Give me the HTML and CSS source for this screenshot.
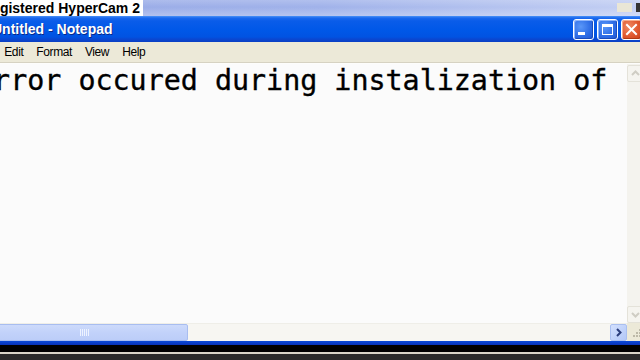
FILE: index.html
```html
<!DOCTYPE html>
<html>
<head>
<meta charset="utf-8">
<title>Untitled - Notepad</title>
<link rel="stylesheet" href="styles.css">
</head>
<body>
<div class="screen">
  <div class="bg-title">
    <span class="watermark"><span class="wm-text">Unregistered HyperCam 2</span></span>
    <span class="bg-btns"><span class="bg-btn"></span><span class="bg-btn dark"></span></span>
  </div>
  <div class="window">
    <div class="titlebar">
      <svg class="app-icon" width="16" height="16" viewBox="0 0 16 16"><rect x="2" y="1" width="12" height="14" fill="#fff" stroke="#333"/><path d="M4 5h8M4 8h8M4 11h6" stroke="#6a8fd8"/></svg>
      <span class="title">Untitled - Notepad</span>
      <div class="caption-btns">
        <span class="cap">
          <svg width="19" height="19" viewBox="0 0 19 19"><rect x="4" y="12" width="7" height="3" fill="#fff"/></svg>
        </span>
        <span class="cap">
          <svg width="19" height="19" viewBox="0 0 19 19"><rect x="4.5" y="5" width="10" height="9.5" fill="none" stroke="#fff" stroke-width="1"/><rect x="4" y="4" width="11" height="3" fill="#fff"/></svg>
        </span>
        <span class="cap close">
          <svg width="19" height="19" viewBox="0 0 19 19"><path d="M5 5l9 9M14 5l-9 9" stroke="#fff" stroke-width="2" stroke-linecap="square"/></svg>
        </span>
      </div>
    </div>
    <div class="menubar">
      <span class="menu-item">File</span>
      <span class="menu-item">Edit</span>
      <span class="menu-item">Format</span>
      <span class="menu-item">View</span>
      <span class="menu-item">Help</span>
    </div>
    <div class="menu-sep"></div>
    <div class="client">
      <div class="editor">
        <div class="text">Error occured during instalization of</div>
      </div>
      <div class="vscroll">
        <span class="sb-btn dim">
          <svg width="15" height="15" viewBox="0 0 15 15"><path d="M4 9l3.5-3.5L11 9" fill="none" stroke="#cfcdc4" stroke-width="2"/></svg>
        </span>
        <span class="sb-track"></span>
        <span class="sb-btn dim">
          <svg width="15" height="15" viewBox="0 0 15 15"><path d="M4 6l3.5 3.5L11 6" fill="none" stroke="#cfcdc4" stroke-width="2"/></svg>
        </span>
      </div>
      <div class="hscroll">
        <span class="sb-btn blue">
          <svg width="15" height="15" viewBox="0 0 15 15"><path d="M9 4L5.5 7.5 9 11" fill="none" stroke="#2c3e7c" stroke-width="2"/></svg>
        </span>
        <span class="thumb">
          <svg width="9" height="7" viewBox="0 0 9 7"><path d="M0.5 0v7M2.5 0v7M4.5 0v7M6.5 0v7M8.5 0v7" stroke="#eef3ff"/></svg>
        </span>
        <span class="sb-track h"></span>
        <span class="sb-btn blue">
          <svg width="15" height="15" viewBox="0 0 15 15"><path d="M6 4l3.5 3.5L6 11" fill="none" stroke="#2c3e7c" stroke-width="2"/></svg>
        </span>
      </div>
      <div class="corner">
        <svg width="17" height="18" viewBox="0 0 17 18"><g fill="#bdb9a8"><rect x="12" y="6" width="2" height="2"/><rect x="9" y="9" width="2" height="2"/><rect x="12" y="9" width="2" height="2"/><rect x="6" y="12" width="2" height="2"/><rect x="9" y="12" width="2" height="2"/><rect x="12" y="12" width="2" height="2"/></g></svg>
      </div>
    </div>
    <div class="bottom-border"></div>
  </div>
  <div class="below">
    <div class="blk"></div>
    <div class="line"></div>
    <div class="dark"></div>
  </div>
</div>
</body>
</html>
```

FILE: styles.css
```css
* { box-sizing: border-box; }
html, body { margin: 0; padding: 0; background: #222; }
body { font-family: "Liberation Sans", Arial, sans-serif; }

.screen {
  width: 640px;
  height: 360px;
  overflow: hidden;
  display: flex;
  flex-direction: column;
  background: #2b2b2b;
}

/* background inactive window strip */
.bg-title {
  height: 16px;
  flex-shrink: 0;
  display: flex;
  align-items: stretch;
  background:
    linear-gradient(to bottom, rgba(255,255,255,0.18) 0%, rgba(255,255,255,0) 45%, rgba(255,255,255,0.25) 100%),
    linear-gradient(to right, #97a9e6 0%, #a0b2ea 50%, #c3cff3 100%);
}
.watermark {
  width: 143px;
  height: 16px;
  background: #fff;
  overflow: hidden;
  white-space: nowrap;
}
.wm-text {
  display: block;
  margin-left: -32px;
  font-weight: bold;
  font-size: 14px;
  line-height: 16px;
  color: #000;
}
.bg-btns {
  margin-left: auto;
  display: flex;
  align-items: flex-start;
  gap: 4px;
  padding-top: 3px;
  margin-right: -4px;
}
.bg-btn {
  width: 15px;
  height: 9px;
  background: #e9e6d6;
}
.bg-btn.dark {
  width: 8px;
  background: #333;
}

/* Notepad window */
.window {
  width: 688px;
  margin-left: -40px;
  flex-shrink: 0;
  display: flex;
  flex-direction: column;
  background: #0a46d8;
}
.titlebar {
  height: 26px;
  display: flex;
  align-items: center;
  padding: 0 6px 0 10px;
  background: linear-gradient(to bottom,
    #4b92f7 0px, #1a68ee 2px, #0a5ce9 5px, #0058e8 14px,
    #0153e2 21px, #0a48d2 23px, #0a3fc4 26px);
}
.app-icon { flex-shrink: 0; }
.title {
  margin-left: 6px;
  color: #fff;
  font-weight: bold;
  font-size: 14px;
  text-shadow: 1px 1px 0 #0a2a8a;
  white-space: nowrap;
}
.caption-btns {
  margin-left: auto;
  display: flex;
  gap: 3px;
}
.cap {
  width: 21px;
  height: 21px;
  border: 1px solid #fff;
  border-radius: 3px;
  background: radial-gradient(circle at 35% 35%, #5a97f8 0%, #2f6ee6 55%, #1f55d3 100%);
  box-shadow: inset -1px -1px 0 #1a4cbc, inset 1px 1px 0 #8fb6fb;
  display: flex;
}
.cap.close {
  background: radial-gradient(circle at 35% 35%, #f08b64 0%, #e0582f 55%, #c8431c 100%);
  box-shadow: inset -1px -1px 0 #b23a14, inset 1px 1px 0 #f5ad8e;
}

.menubar {
  height: 20px;
  display: flex;
  align-items: center;
  padding-left: 3px;
  background: #ece9d8;
  border-left: 4px solid #0a46d8;
  border-right: 4px solid #0a46d8;
  font-size: 12px;
  letter-spacing: -0.4px;
  color: #000;
}
.menu-item { padding: 0 6.5px; }
.menu-sep {
  height: 2px;
  background: linear-gradient(to bottom, #d6d2c2 0, #d6d2c2 1px, #fdfdfb 1px);
  border-left: 4px solid #0a46d8;
  border-right: 4px solid #0a46d8;
}

.client {
  display: grid;
  grid-template-columns: 1fr 17px;
  grid-template-rows: 259px 18px;
  border-left: 4px solid #0a46d8;
  border-right: 4px solid #0a46d8;
}
.editor {
  background: #fbfbfb;
  overflow: hidden;
  padding-left: 12px;
  padding-top: 1px;
}
.text {
  font-family: "DejaVu Sans Mono", "Liberation Mono", monospace;
  font-size: 28.35px;
  line-height: 32px;
  color: #000;
  white-space: nowrap;
  -webkit-text-stroke: 0.35px #000;
}

.vscroll {
  display: flex;
  flex-direction: column;
  background: #f4f3ee;
  padding-top: 1px;
}
.sb-track { flex: 1; }
.sb-btn {
  width: 17px;
  height: 17px;
  border-radius: 2px;
  display: flex;
  align-items: center;
  justify-content: center;
  flex-shrink: 0;
}
.sb-btn.dim {
  background: #f5f4ef;
  border: 1px solid #e4e2d9;
}
.sb-btn.blue {
  background: linear-gradient(135deg, #d3e0fd 0%, #bfd1fa 60%, #b4c8f6 100%);
  border: 1px solid #aabff0;
}

.hscroll {
  display: flex;
  align-items: center;
  background: #f7f6f2;
  border-top: 1px solid #efeee8;
}
.thumb {
  width: 207px;
  height: 17px;
  background: linear-gradient(to bottom, #cddafb 0%, #c2d2fa 50%, #bccdf8 100%);
  border: 1px solid #a8bdf0;
  border-radius: 2px;
  display: flex;
  align-items: center;
  justify-content: center;
}
.sb-track.h { height: 17px; }
.corner {
  background: #ece9d8;
}

.bottom-border {
  height: 4px;
  background: linear-gradient(to bottom, #0a4ad8, #0832b8);
}

.below {
  flex: 1;
  display: flex;
  flex-direction: column;
}
.blk { height: 7px; background: #000; }
.line { height: 2px; background: #d9d5c8; }
.dark { flex: 1; background: #2a2a2a; }
```
